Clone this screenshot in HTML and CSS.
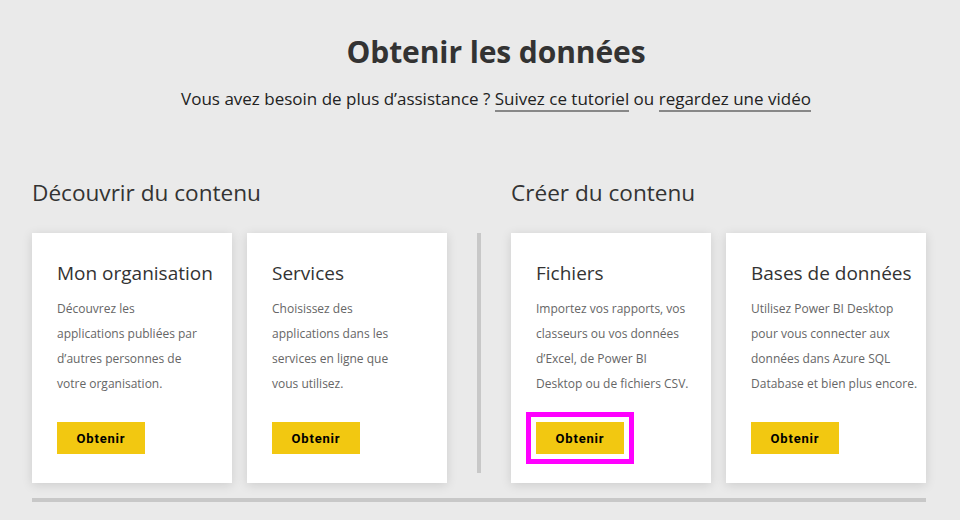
FILE: index.html
```html
<!DOCTYPE html>
<html lang="fr">
<head>
<meta charset="utf-8">
<title>Obtenir les données</title>
<link rel="stylesheet" href="styles.css">
</head>
<body>
<header class="intro">
  <h1 class="intro-title">Obtenir les données</h1>
  <p class="intro-sub">Vous avez besoin de plus d’assistance ? <a class="intro-link" href="#">Suivez ce tutoriel</a> ou <a class="intro-link" href="#">regardez une vidéo</a></p>
</header>
<main class="sections">
  <section class="group">
    <h2 class="group-title">Découvrir du contenu</h2>
    <div class="cards">
      <div class="card">
        <h3 class="card-title">Mon organisation</h3>
        <p class="card-text">Découvrez les<br>applications publiées par<br>d’autres personnes de<br>votre organisation.</p>
        <button class="btn">Obtenir</button>
      </div>
      <div class="card">
        <h3 class="card-title">Services</h3>
        <p class="card-text">Choisissez des<br>applications dans les<br>services en ligne que<br>vous utilisez.</p>
        <button class="btn">Obtenir</button>
      </div>
    </div>
  </section>
  <div class="divider"></div>
  <section class="group">
    <h2 class="group-title">Créer du contenu</h2>
    <div class="cards">
      <div class="card">
        <h3 class="card-title">Fichiers</h3>
        <p class="card-text">Importez vos rapports, vos<br>classeurs ou vos données<br>d’Excel, de Power BI<br>Desktop ou de fichiers CSV.</p>
        <button class="btn btn-highlight">Obtenir</button>
      </div>
      <div class="card">
        <h3 class="card-title">Bases de données</h3>
        <p class="card-text">Utilisez Power BI Desktop<br>pour vous connecter aux<br>données dans Azure SQL<br>Database et bien plus encore.</p>
        <button class="btn">Obtenir</button>
      </div>
    </div>
  </section>
</main>
<div class="bottom-rule"></div>
</body>
</html>
```

FILE: styles.css
```css
html, body {
  margin: 0;
  padding: 0;
}
body {
  background: #eaeaea;
  font-family: "Open Sans", "Noto Sans", sans-serif;
  color: #333;
  width: 960px;
  height: 520px;
  overflow: hidden;
}
.intro {
  text-align: center;
  padding: 34px 0 0 32px;
}
.intro-title {
  margin: 0;
  font-size: 30px;
  line-height: 36px;
  font-weight: 700;
  color: #333;
  letter-spacing: -0.1px;
}
.intro-sub {
  margin: 18px 0 0;
  font-size: 17px;
  line-height: 22px;
  color: #222;
}
.intro-link {
  color: #222;
  text-decoration: none;
  border-bottom: 2px solid #888;
}
.sections {
  display: flex;
  padding: 0 34px 0 32px;
  margin-top: 68px;
}
.group {
  width: 415px;
}
.group-title {
  margin: 0;
  font-size: 22.6px;
  line-height: 30px;
  font-weight: 400;
  color: #333;
}
.cards {
  display: flex;
  gap: 15px;
  margin-top: 25px;
}
.card {
  width: 200px;
  height: 250px;
  box-sizing: border-box;
  background: #fff;
  box-shadow: 0 2px 10px rgba(0, 0, 0, 0.13);
  padding: 27px 0 0 25px;
  display: flex;
  flex-direction: column;
  align-items: flex-start;
}
.card-title {
  margin: 0;
  font-size: 19px;
  line-height: 26px;
  font-weight: 400;
  color: #333;
  white-space: nowrap;
}
.card-text {
  margin: 10px 0 0;
  font-size: 12px;
  line-height: 25px;
  color: #666;
  height: 100px;
  white-space: nowrap;
}
.btn {
  margin-top: 26px;
  width: 88px;
  height: 32px;
  border: 0;
  background: #f2c811;
  font-family: Roboto, sans-serif;
  font-weight: 700;
  font-size: 13px;
  letter-spacing: 0.8px;
  color: #000;
  padding: 0;
}
.btn-highlight {
  outline: 5px solid #ff00ff;
  outline-offset: 5px;
}
.divider {
  width: 4px;
  height: 240px;
  background: #c8c8c8;
  margin: 55px 30px 0;
}
.bottom-rule {
  height: 4px;
  background: #c8c8c8;
  margin: 15px 34px 0 32px;
}
```
